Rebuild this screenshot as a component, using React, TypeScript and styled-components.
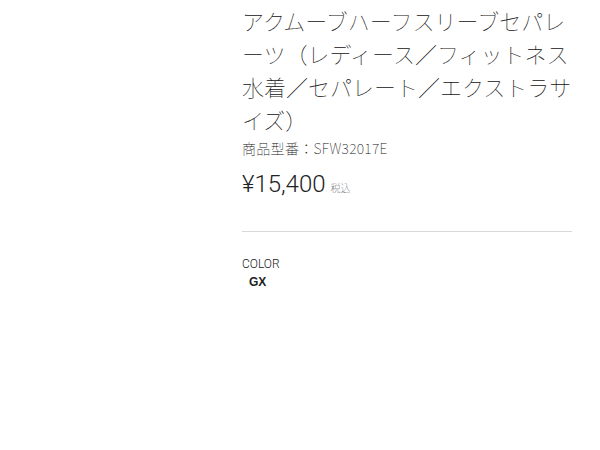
import React from "react";
import styled, { createGlobalStyle } from "styled-components";

const Global = createGlobalStyle`
  html, body { margin: 0; padding: 0; background: #fff; }
  body { font-family: "Noto Sans CJK JP", "Noto Sans", sans-serif; color: #222; }
`;

const Page = styled.div`
  padding: 4px 0 0 242px;
`;

const Column = styled.div`
  width: 330px;
  display: flex;
  flex-direction: column;
`;

const Title = styled.h1`
  margin: 0;
  font-size: 22px;
  line-height: 33px;
  font-weight: 100;
  color: #111;
`;

const ModelNo = styled.p`
  margin: 2px 0 0;
  font-size: 14px;
  line-height: 20px;
  font-weight: 100;
  letter-spacing: 0.3px;
  color: #111;
`;

const PriceRow = styled.div`
  display: flex;
  align-items: baseline;
  gap: 5px;
  margin-top: 11px;
`;

const Price = styled.span`
  font-family: "Roboto", "Noto Sans CJK JP", sans-serif;
  font-size: 24px;
  line-height: 30px;
  font-weight: 300;
  color: #222;
`;

const Tax = styled.span`
  font-size: 10px;
  font-weight: 100;
  color: #444;
`;

const Divider = styled.hr`
  margin: 32px 0 0;
  border: none;
  border-top: 1px solid #d5d9dc;
`;

const Label = styled.div`
  margin-top: 24px;
  font-family: "Roboto", sans-serif;
  font-size: 12px;
  line-height: 16px;
  font-weight: 300;
  color: #222;
`;

const Value = styled.div`
  margin-top: 2px;
  padding-left: 7px;
  font-family: "Liberation Sans", sans-serif;
  font-size: 12px;
  line-height: 16px;
  font-weight: 700;
  color: #222;
`;

export default function App() {
  return (
    <Page>
      <Global />
      <Column>
        <Title>
          アクムーブハーフスリーブセパレーツ（レディース／フィットネス水着／セパレート／エクストラサイズ）
        </Title>
        <ModelNo>商品型番：SFW32017E</ModelNo>
        <PriceRow>
          <Price>¥15,400</Price>
          <Tax>税込</Tax>
        </PriceRow>
        <Divider />
        <Label>COLOR</Label>
        <Value>GX</Value>
      </Column>
    </Page>
  );
}
